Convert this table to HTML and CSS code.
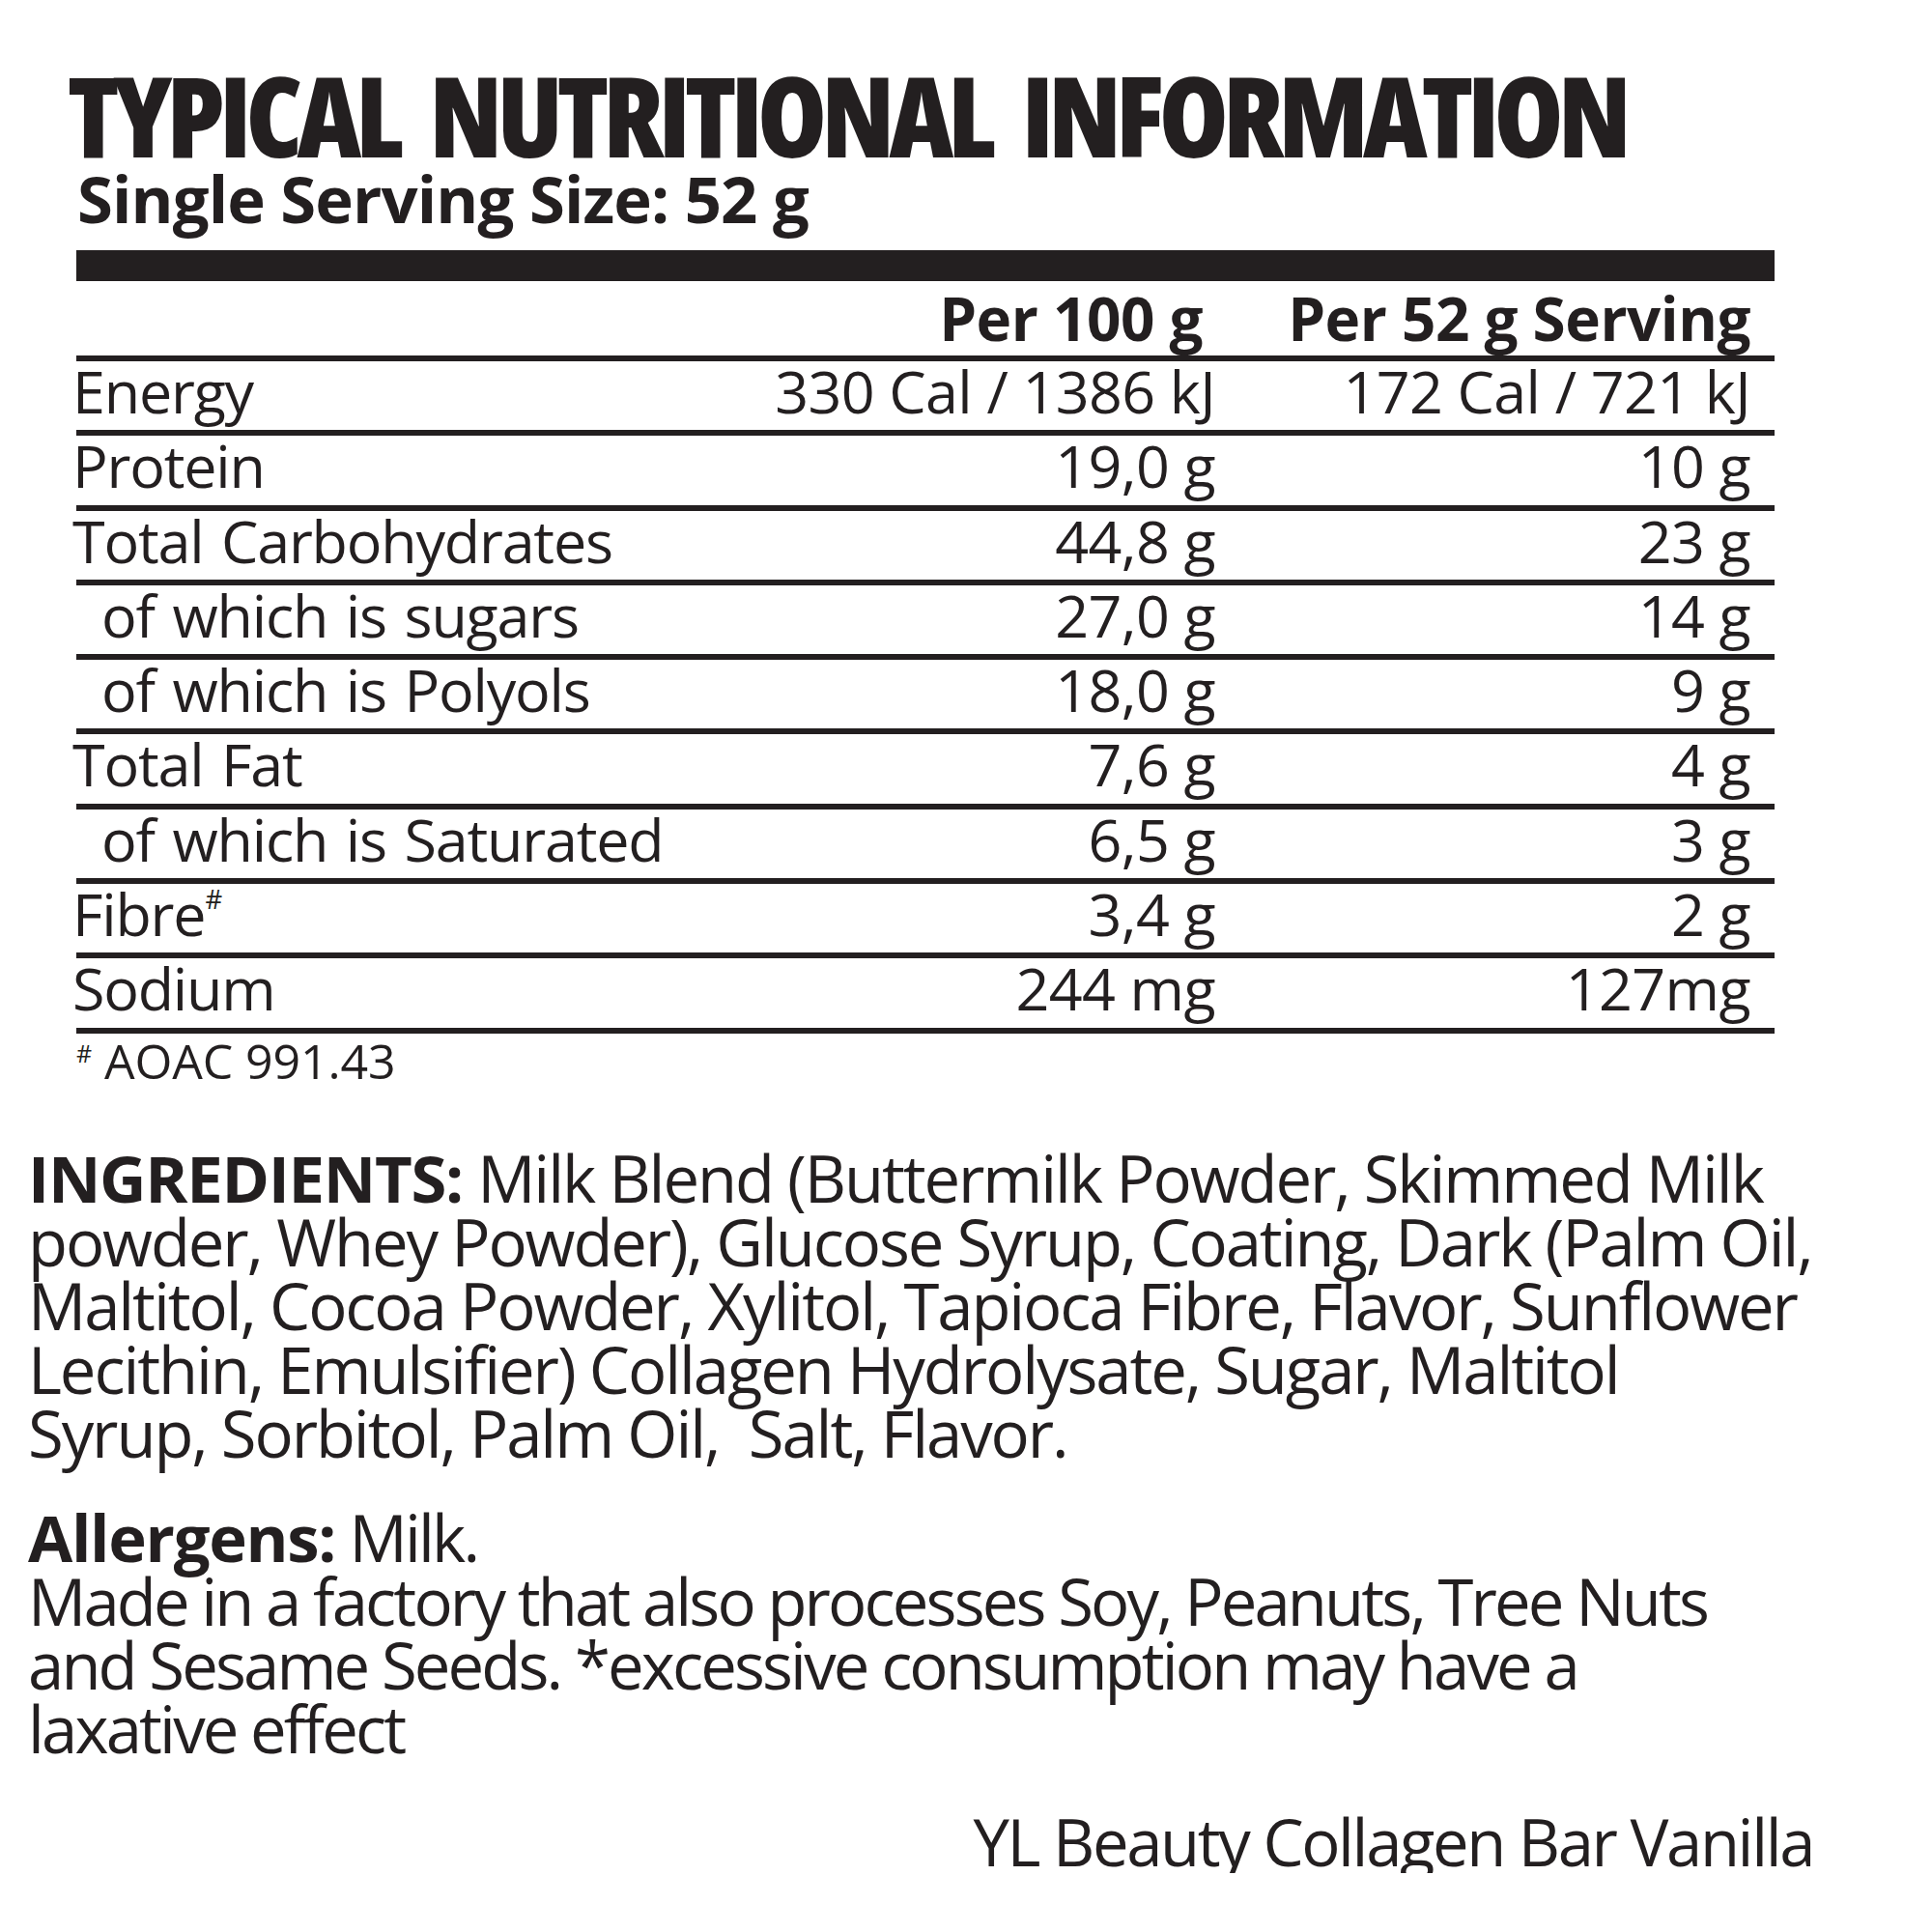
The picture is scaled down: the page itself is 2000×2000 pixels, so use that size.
FILE: index.html
```
<!DOCTYPE html>
<html lang="en">
<head>
<meta charset="utf-8">
<title>Typical Nutritional Information</title>
<link rel="stylesheet" href="styles.css">
</head>
<body>
<main class="label">
  <header class="head">
    <h1 class="title">TYPICAL NUTRITIONAL INFORMATION</h1>
    <p class="serving">Single Serving Size: 52 g</p>
  </header>

  <section class="panel">
    <div class="bar"></div>
    <div class="row row-head">
      <span></span>
      <span class="val val-h1">Per 100 g</span>
      <span class="val">Per 52 g Serving</span>
    </div>
    <div class="row"><span class="name">Energy</span><span class="val">330 Cal / 1386 kJ</span><span class="val">172 Cal / 721 kJ</span></div>
    <div class="row"><span class="name">Protein</span><span class="val">19,0 g</span><span class="val">10 g</span></div>
    <div class="row"><span class="name">Total Carbohydrates</span><span class="val">44,8 g</span><span class="val">23 g</span></div>
    <div class="row"><span class="name sub">of which is sugars</span><span class="val">27,0 g</span><span class="val">14 g</span></div>
    <div class="row"><span class="name sub">of which is Polyols</span><span class="val">18,0 g</span><span class="val">9 g</span></div>
    <div class="row"><span class="name">Total Fat</span><span class="val">7,6 g</span><span class="val">4 g</span></div>
    <div class="row"><span class="name sub">of which is Saturated</span><span class="val">6,5 g</span><span class="val">3 g</span></div>
    <div class="row"><span class="name">Fibre<sup class="mark">#</sup></span><span class="val">3,4 g</span><span class="val">2 g</span></div>
    <div class="row"><span class="name">Sodium</span><span class="val">244 mg</span><span class="val">127mg</span></div>
    <p class="note"><sup class="mark">#</sup> AOAC 991.43</p>
  </section>

  <p class="text ingredients"><b>INGREDIENTS:</b> Milk Blend (Buttermilk Powder, Skimmed Milk<br>powder, Whey Powder), Glucose Syrup, Coating, Dark (Palm Oil,<br>Maltitol, Cocoa Powder, Xylitol, Tapioca Fibre, Flavor, Sunflower<br>Lecithin, Emulsifier) Collagen Hydrolysate, Sugar, Maltitol<br>Syrup, Sorbitol, Palm Oil,&nbsp; Salt, Flavor.</p>

  <p class="text allergens"><b>Allergens:</b> Milk.<br>Made in a factory that also processes Soy, Peanuts, Tree Nuts<br>and Sesame Seeds. *excessive consumption may have a<br>laxative effect</p>

  <p class="product">YL Beauty Collagen Bar Vanilla</p>
</main>
</body>
</html>
```
FILE: styles.css
```
html, body {
  margin: 0;
  padding: 0;
  background: #ffffff;
}

body {
  font-family: "Open Sans", "Noto Sans", "Liberation Sans", sans-serif;
  color: #231f20;
}

.label {
  width: 2000px;
  display: flex;
  flex-direction: column;
}

.head {
  padding: 68px 0 0 70px;
}

.title {
  margin: 0;
  font-size: 116px;
  line-height: 100px;
  font-weight: 800;
  font-stretch: 75%;
  letter-spacing: -5.9px;
  word-spacing: 18px;
  white-space: nowrap;
}

.serving {
  margin: 0 0 0 10px;
  font-size: 67px;
  line-height: 74px;
  font-weight: 700;
  letter-spacing: -0.9px;
  white-space: nowrap;
}

.panel {
  margin: 17px 0 0 79px;
  width: 1758px;
  display: flex;
  flex-direction: column;
}

.bar {
  height: 32px;
  background: #231f20;
}

.row {
  display: grid;
  grid-template-columns: 1fr 460px 554px;
  padding-right: 25px;
  border-bottom: 6px solid #231f20;
  height: 71.3px;
  box-sizing: content-box;
  font-size: 61px;
  line-height: 61px;
  white-space: nowrap;
}

.row > span {
  align-self: start;
}

.row-head {
  height: 77px;
  font-size: 62px;
  line-height: 77px;
  font-weight: 700;
}

.row-head .val {
  letter-spacing: -0.5px;
}

.val {
  text-align: right;
  letter-spacing: -0.6px;
}

.val-h1 {
  padding-right: 13px;
}

.name {
  text-indent: -4px;
  letter-spacing: -1.2px;
  word-spacing: 4px;
}

.name.sub {
  padding-left: 30px;
}

.mark {
  font-size: 0.45em;
  vertical-align: top;
  line-height: 1;
  position: relative;
  top: 2px;
}

.note {
  margin: 0;
  font-size: 50px;
  line-height: 56px;
  letter-spacing: -0.1px;
  white-space: nowrap;
}

.note .mark {
  font-size: 0.5em;
  top: 8px;
}

.text {
  margin: 0;
  padding-left: 29px;
  font-size: 67px;
  line-height: 66px;
  white-space: nowrap;
}

.text b {
  font-weight: 700;
  letter-spacing: -1.3px;
}

.ingredients {
  margin-top: 60px;
  letter-spacing: -2.1px;
}

.allergens {
  margin-top: 42px;
  letter-spacing: -2.85px;
}

.product {
  margin: 51px 0 0;
  padding-right: 123px;
  text-align: right;
  font-size: 67px;
  line-height: 66px;
  letter-spacing: -2.4px;
  white-space: nowrap;
}
```
